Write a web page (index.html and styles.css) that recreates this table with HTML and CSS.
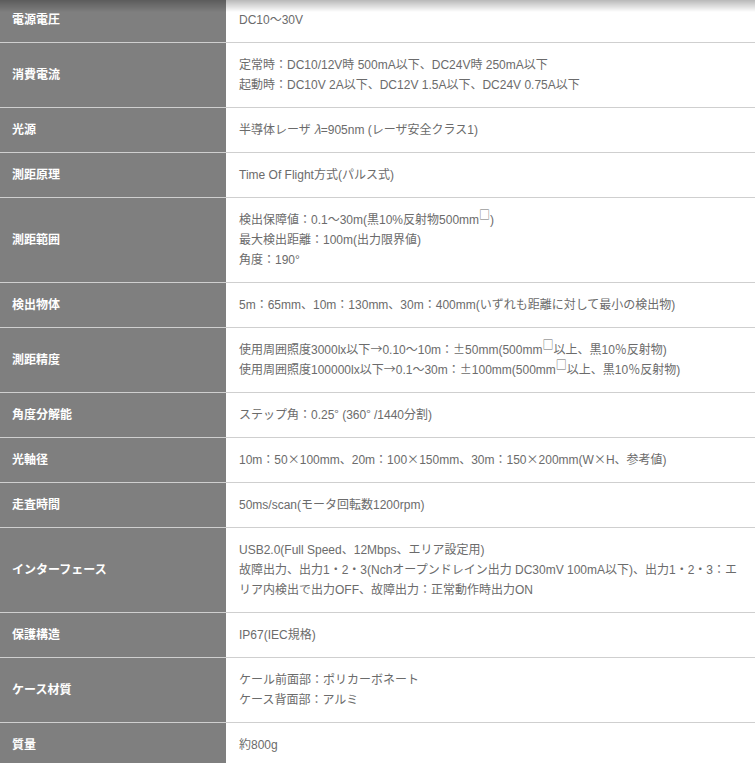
FILE: index.html
```html
<!DOCTYPE html>
<html lang="ja">
<head>
<meta charset="utf-8">
<title>仕様</title>
<link rel="stylesheet" href="styles.css">
</head>
<body>
<div class="shade"></div>
<table class="spec">
<tbody>
<tr><th>電源電圧</th><td>DC10～30V</td></tr>
<tr><th>消費電流</th><td>定常時：DC10/12V時 500mA以下、DC24V時 250mA以下<br>起動時：DC10V 2A以下、DC12V 1.5A以下、DC24V 0.75A以下</td></tr>
<tr><th>光源</th><td>半導体レーザ <i class="lam">λ</i>=905nm (レーザ安全クラス1)</td></tr>
<tr><th>測距原理</th><td>Time Of Flight方式(パルス式)</td></tr>
<tr><th>測距範囲</th><td>検出保障値：0.1～30m(黒10%反射物500mm<span class="sq">□</span>)<br>最大検出距離：100m(出力限界値)<br>角度：190°</td></tr>
<tr><th>検出物体</th><td>5m：65mm、10m：130mm、30m：400mm(いずれも距離に対して最小の検出物)</td></tr>
<tr><th>測距精度</th><td>使用周囲照度3000lx以下<span class="j">→</span>0.10～10m：<span class="j">±</span>50mm(500mm<span class="sq">□</span>以上、黒10<span class="j">%</span>反射物)<br>使用周囲照度100000lx以下<span class="j">→</span>0.1～30m：<span class="j">±</span>100mm(500mm<span class="sq">□</span>以上、黒10<span class="j">%</span>反射物)</td></tr>
<tr><th>角度分解能</th><td>ステップ角：0.25<span class="j">°</span> (360<span class="j">°</span> /1440分割)</td></tr>
<tr><th>光軸径</th><td>10m：50<span class="j">×</span>100mm、20m：100<span class="j">×</span>150mm、30m：150<span class="j">×</span>200mm(W<span class="j">×</span>H、参考値)</td></tr>
<tr><th>走査時間</th><td>50ms/scan(モータ回転数1200rpm)</td></tr>
<tr><th>インターフェース</th><td>USB2.0(Full Speed、12Mbps、エリア設定用)<br>故障出力、出力1・2・3(Nchオープンドレイン出力 DC30mV 100mA以下)、出力1・2・3：エリア内検出で出力OFF、故障出力：正常動作時出力ON</td></tr>
<tr><th>保護構造</th><td>IP67(IEC規格)</td></tr>
<tr><th>ケース材質</th><td>ケール前面部：ポリカーボネート<br>ケース背面部：アルミ</td></tr>
<tr><th>質量</th><td>約800g</td></tr>
</tbody>
</table>
</body>
</html>
```
FILE: styles.css
```css
html, body {
  margin: 0;
  padding: 0;
  background: #fff;
}
body {
  font-family: "Liberation Sans", "Noto Sans CJK JP", sans-serif;
  font-size: 12px;
  line-height: 20px;
  color: #6b6b6b;
  overflow: hidden;
}
.shade {
  position: fixed;
  top: 0;
  left: 0;
  right: 0;
  height: 12px;
  background: linear-gradient(rgba(0,0,0,0.28), rgba(0,0,0,0));
  pointer-events: none;
  z-index: 2;
}
.spec {
  width: 100%;
  border-collapse: collapse;
  margin-top: -2px;
}
.spec th,
.spec td {
  border-bottom: 1px solid #cfcfcf;
  padding: 12px 12px 12px 13px;
  vertical-align: middle;
  text-align: left;
}
.spec th {
  width: 202px;
  background: #7f7f7f;
  color: #fff;
  font-weight: bold;
  padding-left: 12px;
}
.spec td {
  color: #6b6b6b;
}
.lam {
  font-family: "Noto Sans CJK JP", sans-serif;
  font-style: italic;
  line-height: 0;
}
.j {
  font-family: "Noto Sans CJK JP", sans-serif;
  font-feature-settings: "fwid";
  line-height: 0;
}
.sq {
  font-family: "Noto Sans CJK JP", sans-serif;
  font-size: 11px;
  vertical-align: 5px;
  line-height: 0;
}
```
